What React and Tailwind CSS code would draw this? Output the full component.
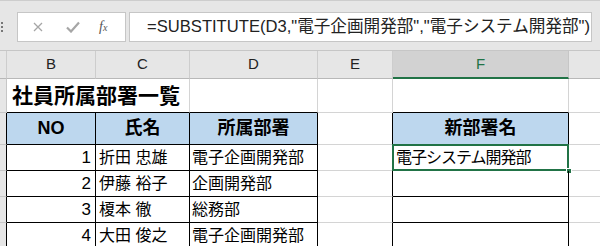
import React from 'react';

const FONT = "font-['Liberation_Sans','Noto_Sans_CJK_JP',sans-serif]";

const rows = [
  { no: 1, name: '折田 忠雄', dept: '電子企画開発部', result: '電子システム開発部' },
  { no: 2, name: '伊藤 裕子', dept: '企画開発部', result: '' },
  { no: 3, name: '榎本 徹', dept: '総務部', result: '' },
  { no: 4, name: '大田 俊之', dept: '電子企画開発部', result: '' },
];

function FormulaBar() {
  return (
    <div className="h-[50px] bg-[#e6e6e6] border-t border-[#cdcdcd] flex items-start pt-[11px]">
      <div className="w-[17px] h-[30px] flex flex-col items-start justify-center gap-[2px] pl-[1px]">
        <span className="w-[2px] h-[2px] bg-[#777]" />
        <span className="w-[2px] h-[2px] bg-[#777]" />
        <span className="w-[2px] h-[2px] bg-[#777]" />
      </div>
      <div className="w-[109px] h-[30px] bg-white border border-[#c6c6c6] flex items-center">
        <svg className="ml-[15px]" width="10" height="10" viewBox="0 0 10 10">
          <path d="M1 1L9 9M9 1L1 9" stroke="#a6a6a6" strokeWidth="1.3" />
        </svg>
        <svg className="ml-[23px]" width="14" height="12" viewBox="0 0 14 12">
          <path d="M1 6.5L5 10.5L13 1.5" stroke="#a6a6a6" strokeWidth="2.2" fill="none" />
        </svg>
        <span className="ml-[19px] font-['Liberation_Serif',serif] italic text-[14px] text-[#555] leading-none">
          f<span className="text-[10px]">x</span>
        </span>
      </div>
      <div className={`ml-[3px] w-[463px] h-[30px] bg-white border border-[#c6c6c6] flex items-center pl-[17px] whitespace-nowrap overflow-hidden text-[16.6px] text-[#222] ${FONT}`}>
        =SUBSTITUTE(D3,"電子企画開発部","電子システム開発部")
      </div>
    </div>
  );
}

function ColHeader({ label, active, last }) {
  return (
    <div
      className={`h-[28px] flex items-center justify-center text-[15px] ${FONT} ${
        active
          ? 'bg-[#d2d2d2] text-[#217346] border-b-2 border-b-[#217346] border-r border-r-[#c6c6c6]'
          : 'bg-[#e6e6e6] text-[#222] border-b border-b-[#b8b8b8] border-r border-r-[#cdcdcd]'
      } ${last ? 'border-r-0' : ''}`}
    >
      {label}
    </div>
  );
}

export default function App() {
  return (
    <div className={`w-[600px] h-[246px] overflow-hidden bg-white ${FONT}`}>
      <FormulaBar />
      <div className="grid grid-cols-[7px_89px_94px_128px_75px_176px_31px] border-t border-[#c6c6c6]">
        {/* column headers */}
        <div className="h-[28px] bg-[#e6e6e6] border-b border-b-[#b8b8b8] border-r border-r-[#cdcdcd]" />
        <ColHeader label="B" />
        <ColHeader label="C" />
        <ColHeader label="D" />
        <ColHeader label="E" />
        <ColHeader label="F" active />
        <ColHeader label="" last />

        {/* row 2: title */}
        <div className="h-[34px] bg-[#e6e6e6] border-r border-r-[#c6c6c6] border-b border-b-[#c6c6c6]" />
        <div className="col-span-2 h-[34px] border-r border-r-[#d4d4d4] border-b border-b-black flex items-end pl-[5px] pb-[3px]">
          <span className="text-[21px] font-bold text-black whitespace-nowrap leading-[26px]">社員所属部署一覧</span>
        </div>
        <div className="h-[34px] border-r border-r-[#d4d4d4] border-b border-b-black" />
        <div className="h-[34px] border-r border-r-[#d4d4d4] border-b border-b-[#d4d4d4]" />
        <div className="h-[34px] border-r border-r-[#d4d4d4] border-b border-b-black" />
        <div className="h-[34px] border-b border-b-[#d4d4d4]" />

        {/* row 3: table header */}
        <div className="h-[32px] bg-[#e6e6e6] border-r border-r-black border-b border-b-[#c6c6c6]" />
        {['NO', '氏名', '所属部署'].map((h) => (
          <div key={h} className="h-[32px] bg-[#bdd7ee] border-r border-r-black border-b border-b-black flex items-center justify-center text-[18px] font-bold text-black">
            {h}
          </div>
        ))}
        <div className="h-[32px] border-r border-r-black border-b border-b-[#d4d4d4]" />
        <div className="h-[32px] bg-[#bdd7ee] border-r border-r-black border-b border-b-black flex items-center justify-center text-[18px] font-bold text-black">
          新部署名
        </div>
        <div className="h-[32px] border-b border-b-[#d4d4d4]" />

        {/* data rows */}
        {rows.map((r) => (
          <React.Fragment key={r.no}>
            <div className="h-[26px] bg-[#e6e6e6] border-r border-r-black border-b border-b-[#c6c6c6]" />
            <div className="h-[26px] border-r border-r-black border-b border-b-black flex items-end justify-end pr-[4px] pb-[1px] text-[17px] text-black leading-[22px]">
              {r.no}
            </div>
            <div className="h-[26px] border-r border-r-black border-b border-b-black flex items-end pl-[3px] pb-[1px] text-[16px] text-black whitespace-nowrap leading-[22px]">
              {r.name}
            </div>
            <div className="h-[26px] border-r border-r-black border-b border-b-black flex items-end pl-[2px] pb-[1px] text-[16px] text-black whitespace-nowrap leading-[22px]">
              {r.dept}
            </div>
            <div className="h-[26px] border-r border-r-black border-b border-b-[#d4d4d4]" />
            <div className="relative h-[26px] border-r border-r-black border-b border-b-black flex items-end pl-[3px] pb-[1px] text-[16px] text-black whitespace-nowrap leading-[22px] tracking-[-1px]">
              {r.result}
              {r.no === 1 && (
                <>
                  <div className="absolute -left-[1px] -top-[1px] -right-[1px] -bottom-[1px] border-2 border-[#217346]" />
                  <div className="absolute -right-[4px] -bottom-[4px] w-[6px] h-[6px] bg-[#217346] border border-white" />
                </>
              )}
            </div>
            <div className="h-[26px] border-b border-b-[#d4d4d4]" />
          </React.Fragment>
        ))}
      </div>
    </div>
  );
}
